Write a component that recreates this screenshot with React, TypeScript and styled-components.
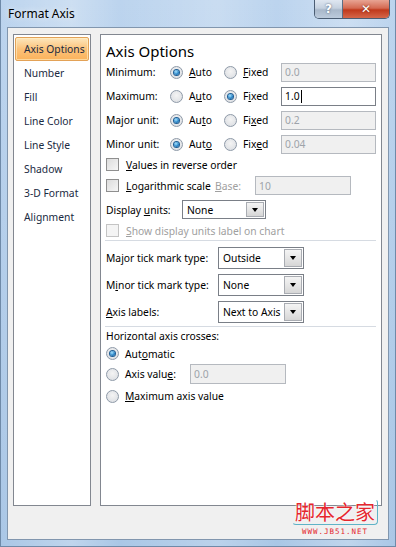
import React from "react";
import styled, { createGlobalStyle, css } from "styled-components";

const Global = createGlobalStyle`
  html, body { margin: 0; padding: 0; background: #b8d0ea; }
  body { font-family: "Noto Sans", "Open Sans", sans-serif; }
`;

const Window = styled.div`
  width: 396px;
  height: 547px;
  box-sizing: border-box;
  padding: 0 6px 6px 6px;
  display: flex;
  flex-direction: column;
  position: relative;
  background:
    linear-gradient(90deg, rgba(255,255,255,0) 0%, rgba(255,255,255,0.25) 18%, rgba(255,255,255,0) 30%, rgba(255,255,255,0.2) 55%, rgba(255,255,255,0) 70%, rgba(255,255,255,0.25) 88%, rgba(255,255,255,0) 100%),
    linear-gradient(180deg, #bcd4ee 0%, #aac7e6 100%);
  border: 1px solid #6f8aa8;
  border-top: none;
`;

const TitleBar = styled.div`
  height: 27px;
  display: flex;
  align-items: flex-start;
  justify-content: space-between;
`;

const Title = styled.div`
  font-size: 12px;
  line-height: 27px;
  color: #000;
  padding-left: 1px;
  text-shadow: 0 0 6px rgba(255, 255, 255, 0.9);
`;

const Caption = styled.div`
  display: flex;
  height: 18px;
  border: 1px solid #4b5d73;
  border-top: none;
  border-radius: 0 0 5px 5px;
  overflow: hidden;
  margin-right: -1px;
`;

const CapBtn = styled.div<{ $close?: boolean }>`
  width: ${(p) => (p.$close ? 46 : 27)}px;
  display: flex;
  align-items: center;
  justify-content: center;
  color: #fff;
  font-family: "DejaVu Sans", sans-serif;
  font-weight: bold;
  font-size: 12px;
  ${(p) =>
    p.$close
      ? css`
          background: linear-gradient(180deg, #e8a493 0%, #d46a52 45%, #c0391c 55%, #d5674a 100%);
          text-shadow: 0 0 2px #6a1a0a;
        `
      : css`
          background: linear-gradient(180deg, #dfe7f1 0%, #c5d1df 45%, #a9b8ca 55%, #bccbdc 100%);
          border-right: 1px solid #5c6e84;
          text-shadow: 0 0 2px #3a4d66;
        `}
`;

const Client = styled.div`
  flex: 1;
  background: #f0f0f0;
  border: 1px solid #8196ae;
  padding: 6px 6px 33px 5px;
  display: flex;
  gap: 9px;
`;

const Nav = styled.div`
  width: 78px;
  background: #fff;
  border: 1px solid #828790;
  padding: 2px 1px;
  display: flex;
  flex-direction: column;
`;

const NavItem = styled.div<{ $active?: boolean }>`
  height: 24px;
  box-sizing: border-box;
  display: flex;
  align-items: center;
  padding-left: 9px;
  font-size: 10.3px;
  color: #1a2a42;
  white-space: nowrap;
  border-radius: 2px;
  ${(p) =>
    p.$active &&
    css`
      background: linear-gradient(180deg, #fde7bd 0%, #fcc27a 50%, #fbb35c 100%);
      border: 1px solid #e3a257;
      padding-left: 8px;
      box-shadow: inset 0 0 0 1px rgba(255, 240, 200, 0.6);
    `}
`;

const Panel = styled.div`
  flex: 1;
  background: #fff;
  border: 1px solid #828790;
  padding: 3px 5px 0 5px;
  display: flex;
  flex-direction: column;
`;

const Heading = styled.div`
  font-size: 15px;
  line-height: 26px;
  color: #000;
  height: 22px;
  flex: none;
`;

const Row = styled.div<{ $h: number }>`
  height: ${(p) => p.$h}px;
  flex: none;
  display: flex;
  align-items: center;
  font-size: 10.3px;
  color: #000;
  white-space: nowrap;
`;

const Label = styled.span<{ $w?: number; $muted?: boolean }>`
  ${(p) => p.$w && `width: ${p.$w}px; flex: none;`}
  color: ${(p) => (p.$muted ? "#a0a0a0" : "#000")};
`;

const Opt = styled.span<{ $w?: number }>`
  display: flex;
  align-items: center;
  gap: 6px;
  ${(p) => p.$w && `width: ${p.$w}px; flex: none;`}
`;

const Radio = styled.span<{ $on?: boolean }>`
  width: 11px;
  height: 11px;
  flex: none;
  border-radius: 50%;
  border: 1px solid #8e9aa8;
  background: radial-gradient(circle at 50% 40%, #f4f4f4 0%, #d8dbe0 100%);
  display: flex;
  align-items: center;
  justify-content: center;
  &::after {
    content: "";
    width: 5px;
    height: 5px;
    border-radius: 50%;
    display: ${(p) => (p.$on ? "block" : "none")};
    background: radial-gradient(circle at 40% 35%, #a9e4ff 0%, #2a86c9 55%, #0d4f8a 100%);
    box-shadow: 0 0 0 1px #1e5d93;
  }
`;

const Check = styled.span<{ $muted?: boolean }>`
  width: 11px;
  height: 11px;
  flex: none;
  border: 1px solid ${(p) => (p.$muted ? "#c4c4c4" : "#8f8f8f")};
  background: ${(p) =>
    p.$muted ? "#f4f4f4" : "linear-gradient(135deg, #dcdcdc 0%, #f6f6f6 100%)"};
  margin-right: 7px;
`;

const Field = styled.span<{ $w: number; $h?: number; $off?: boolean }>`
  width: ${(p) => p.$w}px;
  height: ${(p) => p.$h ?? 19}px;
  box-sizing: border-box;
  flex: none;
  display: flex;
  align-items: center;
  padding-left: 3px;
  font-size: 10.3px;
  border: 1px solid ${(p) => (p.$off ? "#b5b9bf" : "#7a7f87")};
  background: ${(p) => (p.$off ? "#f0f0f0" : "#fff")};
  color: ${(p) => (p.$off ? "#9da3aa" : "#000")};
`;

const Caret = styled.span`
  width: 1px;
  height: 13px;
  background: #000;
  margin-left: 1px;
`;

const Select = styled.span<{ $w: number; $h: number }>`
  width: ${(p) => p.$w}px;
  height: ${(p) => p.$h}px;
  box-sizing: border-box;
  flex: none;
  display: flex;
  border: 1px solid #7a7f87;
  background: #fff;
`;

const SelText = styled.span`
  flex: 1;
  display: flex;
  align-items: center;
  padding-left: 4px;
`;

const Drop = styled.span`
  width: 16px;
  margin: 1px;
  border: 1px solid #a9acb2;
  background: linear-gradient(180deg, #f4f4f4 0%, #e6e6e6 50%, #d6d6d6 100%);
  display: flex;
  align-items: center;
  justify-content: center;
  &::after {
    content: "";
    border-left: 3.5px solid transparent;
    border-right: 3.5px solid transparent;
    border-top: 4px solid #000;
  }
`;

const Sep = styled.div<{ $top?: number; $bottom?: number }>`
  height: 1px;
  flex: none;
  background: #d6dbe2;
  margin: ${(p) => p.$top ?? 0}px 0 ${(p) => p.$bottom ?? 0}px -1px;
`;

const Watermark = styled.div`
  position: absolute;
  right: 17px;
  bottom: 9px;
  display: flex;
  flex-direction: column;
  align-items: center;
  pointer-events: none;
`;

const WmCn = styled.div`
  font-family: "Noto Sans CJK SC", sans-serif;
  font-size: 20px;
  line-height: 24px;
  color: #e5262d;
  text-shadow: 0 0 1px #fff, 0 0 2px #fff;
  padding: 0 2px;
  border: 1px solid #5fb3c7;
  border-radius: 4px;
  border-top-color: transparent;
  border-left-color: transparent;
`;

const WmUrl = styled.div`
  font-family: "DejaVu Sans Mono", monospace;
  font-size: 7.5px;
  line-height: 10px;
  letter-spacing: 1px;
  color: #e5262d;
  margin-top: 2px;
`;

const U = styled.span`
  text-decoration: underline;
  text-underline-offset: 1px;
`;

const navItems = [
  "Axis Options",
  "Number",
  "Fill",
  "Line Color",
  "Line Style",
  "Shadow",
  "3-D Format",
  "Alignment",
];

type UnitRow = {
  label: string;
  auto: React.ReactNode;
  fixed: React.ReactNode;
  fixedOn: boolean;
  value: string;
};

const unitRows: UnitRow[] = [
  { label: "Minimum:", auto: <><U>A</U>uto</>, fixed: <><U>F</U>ixed</>, fixedOn: false, value: "0.0" },
  { label: "Maximum:", auto: <>A<U>u</U>to</>, fixed: <>F<U>i</U>xed</>, fixedOn: true, value: "1.0" },
  { label: "Major unit:", auto: <>Au<U>t</U>o</>, fixed: <>Fi<U>x</U>ed</>, fixedOn: false, value: "0.2" },
  { label: "Minor unit:", auto: <>Aut<U>o</U></>, fixed: <>Fix<U>e</U>d</>, fixedOn: false, value: "0.04" },
];

export default function App() {
  return (
    <>
      <Global />
      <Window>
        <TitleBar>
          <Title>Format Axis</Title>
          <Caption>
            <CapBtn>?</CapBtn>
            <CapBtn $close>✕</CapBtn>
          </Caption>
        </TitleBar>
        <Client>
          <Nav>
            {navItems.map((n, i) => (
              <NavItem key={n} $active={i === 0}>
                {n}
              </NavItem>
            ))}
          </Nav>
          <Panel>
            <Heading>Axis Options</Heading>
            {unitRows.map((r) => (
              <Row $h={24} key={r.label}>
                <Label $w={64}>{r.label}</Label>
                <Opt $w={54}>
                  <Radio $on={!r.fixedOn} />
                  <span>{r.auto}</span>
                </Opt>
                <Opt $w={57}>
                  <Radio $on={r.fixedOn} />
                  <span>{r.fixed}</span>
                </Opt>
                <Field $w={95} $off={!r.fixedOn}>
                  {r.value}
                  {r.fixedOn && <Caret />}
                </Field>
              </Row>
            ))}
            <Row $h={17}>
              <Check />
              <span>
                <U>V</U>alues in reverse order
              </span>
            </Row>
            <Row $h={25}>
              <Check />
              <Label $w={89}>
                <U>L</U>ogarithmic scale
              </Label>
              <Label $w={40} $muted>
                <U>B</U>ase:
              </Label>
              <Field $w={96} $off>
                10
              </Field>
            </Row>
            <Row $h={23}>
              <Label $w={76}>
                Display <U>u</U>nits:
              </Label>
              <Select $w={84} $h={19}>
                <SelText>None</SelText>
                <Drop />
              </Select>
            </Row>
            <Row $h={19}>
              <Check $muted />
              <Label $muted>
                <U>S</U>how display units label on chart
              </Label>
            </Row>
            <Sep $bottom={3} />
            <Row $h={27}>
              <Label $w={112}>
                Ma<U>j</U>or tick mark type:
              </Label>
              <Select $w={86} $h={22}>
                <SelText>Outside</SelText>
                <Drop />
              </Select>
            </Row>
            <Row $h={27}>
              <Label $w={112}>
                M<U>i</U>nor tick mark type:
              </Label>
              <Select $w={86} $h={22}>
                <SelText>None</SelText>
                <Drop />
              </Select>
            </Row>
            <Row $h={27}>
              <Label $w={112}>
                <U>A</U>xis labels:
              </Label>
              <Select $w={86} $h={22}>
                <SelText>Next to Axis</SelText>
                <Drop />
              </Select>
            </Row>
            <Sep $top={1} />
            <Row $h={18}>Horizontal axis crosses:</Row>
            <Row $h={17}>
              <Opt>
                <Radio $on />
                <span>
                  Aut<U>o</U>matic
                </span>
              </Opt>
            </Row>
            <Row $h={24}>
              <Opt $w={84}>
                <Radio />
                <span>
                  Axis valu<U>e</U>:
                </span>
              </Opt>
              <Field $w={96} $h={20} $off>
                0.0
              </Field>
            </Row>
            <Row $h={20}>
              <Opt>
                <Radio />
                <span>
                  <U>M</U>aximum axis value
                </span>
              </Opt>
            </Row>
          </Panel>
        </Client>
        <Watermark>
          <WmCn>脚本之家</WmCn>
          <WmUrl>WWW.JB51.NET</WmUrl>
        </Watermark>
      </Window>
    </>
  );
}
